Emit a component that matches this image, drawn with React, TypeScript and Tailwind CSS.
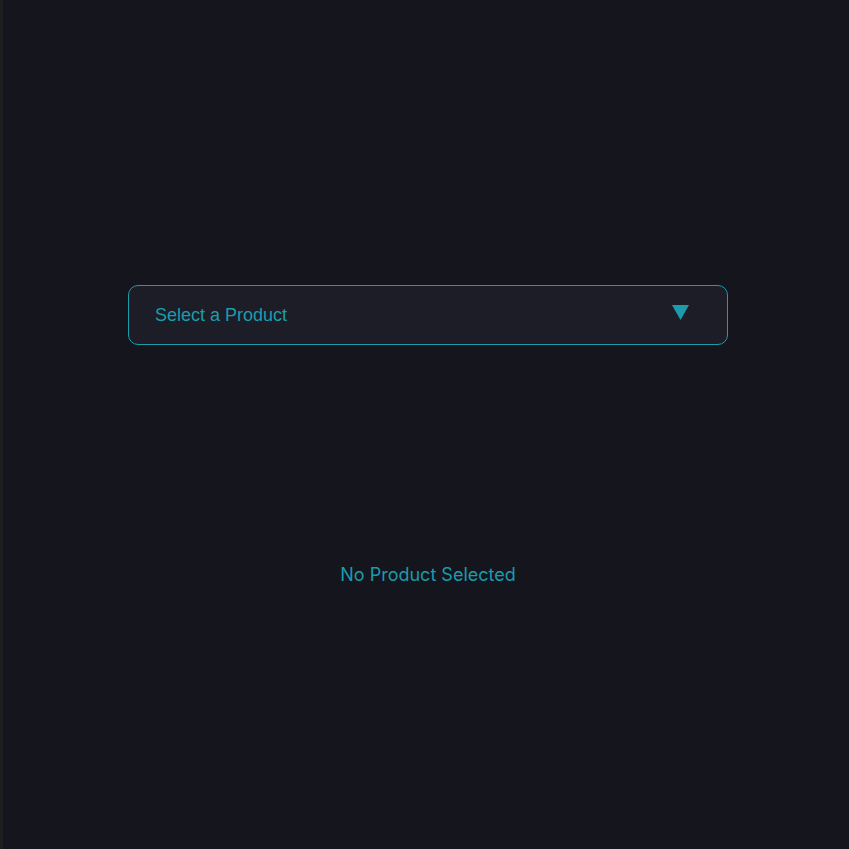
import React from 'react';

export default function App() {
    return (
        <div className="flex h-[849px] w-full bg-[#15151d]">
            {/* left edge strip */}
            <div className="w-[3px] shrink-0 bg-[#1e1e21]"></div>

            <div className="flex flex-1 flex-col">
                <div className="pt-[285px] pl-[125px]">
                    <button
                        type="button"
                        className="flex h-[60px] w-[600px] items-center justify-between rounded-[10px] border border-[#1a9cad] bg-[#1d1d28] pl-[26px] pr-[38px] text-left"
                    >
                        <span className="text-[18px] text-[#1a9cad]" style={{ fontFamily: '"Liberation Sans", Arial, sans-serif' }}>
                            Select a Product
                        </span>
                        <svg width="17" height="15" viewBox="0 0 17 15" className="-mt-[5px]">
                            <polygon points="0,0 17,0 8.5,15" fill="#1a9cad" />
                        </svg>
                    </button>
                </div>

                <div className="mt-[216px] pl-[4px] text-center">
                    <p className="text-[18px] text-[#1a9cad]" style={{ fontFamily: 'Inter, sans-serif' }}>
                        No Product Selected
                    </p>
                </div>
            </div>
        </div>
    );
}
